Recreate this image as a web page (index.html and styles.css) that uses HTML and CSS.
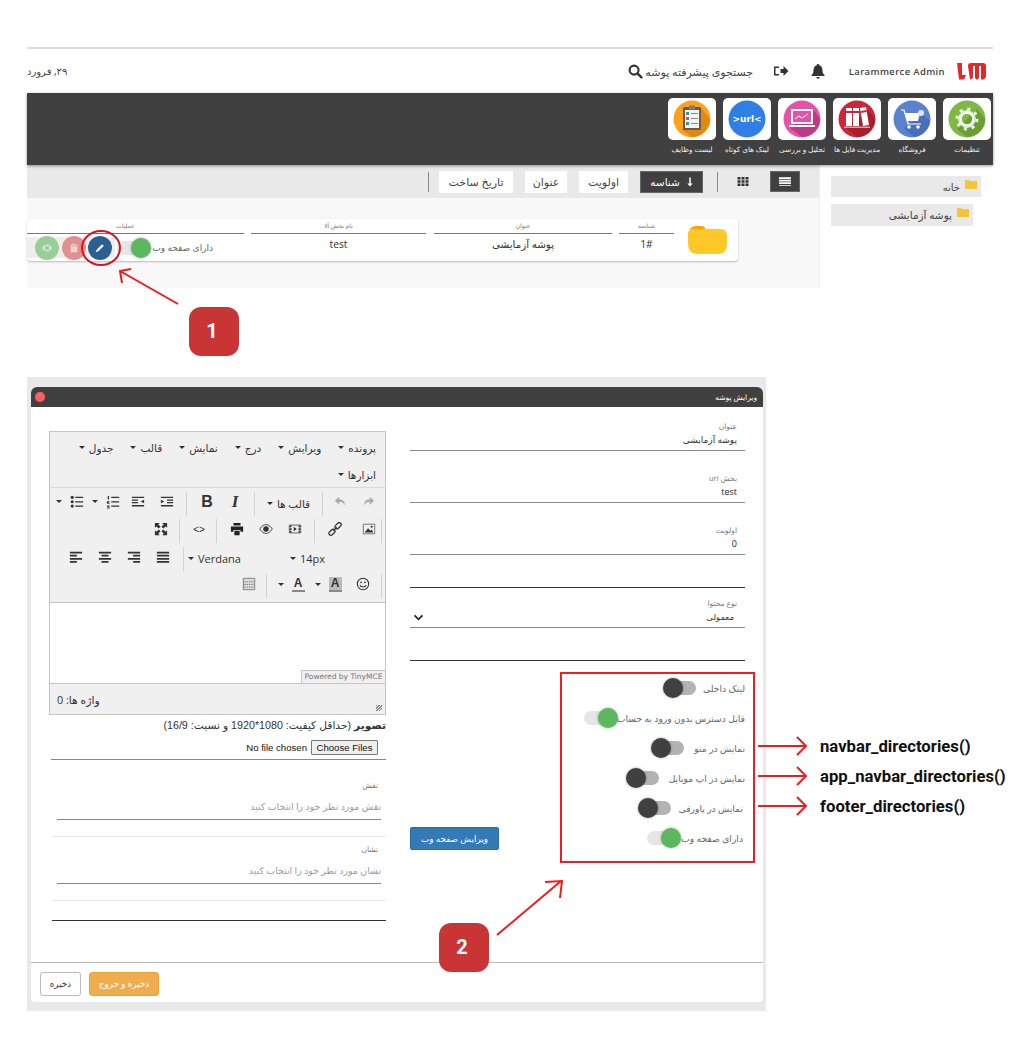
FILE: index.html
```html
<!DOCTYPE html>
<html lang="fa">
<head>
<meta charset="utf-8">
<title>ویرایش پوشه</title>
<link rel="stylesheet" href="styles.css">
</head>
<body>
<main class="page">

  <section class="shot">
    <header class="topbar">
      <svg class="logo" viewBox="0 0 29 18"><path fill="#e8262a" d="M0 1h5v12h4l-2 4.5H2zM11 4q0-3 3-3h12q3 0 3 3v11l-2 2.5h-3V4h-2v12l-2 2-2-2V4h-2v12l-3 1.5z"/></svg>
      <span class="admin">Larammerce Admin</span>
      <svg class="ti ti-bell" viewBox="0 0 16 16"><path fill="#333" d="M8 1a1.3 1.3 0 0 1 1.3 1.3C11.6 3 12.5 5 12.5 7.5c0 2.500.8 3.500 2 4.500v1H1.500v-1c1.200-1 2-2 2-4.500C3.500 5 4.400 3 6.700 2.300A1.300 1.300 0 0 1 8 1zM6.300 14h3.400a1.700 1.700 0 0 1-3.400 0z"/></svg>
      <svg class="ti ti-exit" viewBox="0 0 16 16"><path fill="#333" d="M1 3.500h5v1.500H2.500v6H6v1.500H1zM7.500 6h3V3l5 5-5 5v-3h-3z"/></svg>
      <span class="search-text">جستجوی پیشرفته پوشه</span>
      <svg class="ti ti-search" viewBox="0 0 16 16"><circle cx="6.500" cy="6.500" r="4.800" fill="none" stroke="#333" stroke-width="2.200"/><path stroke="#333" stroke-width="2.600" stroke-linecap="round" d="M10.300 10.300l4 4"/></svg>
      <span class="date">۲۹, فرورد</span>
    </header>

    <nav class="appbar">
      <div class="app">
        <div class="tile"><svg viewBox="0 0 48 42"><circle cx="24" cy="21" r="18.500" fill="#7fb843"/><path fill="#6a9f35" d="M34 11l8 10a18.500 18.500 0 0 1-18 18l-10-8z"/><circle cx="24" cy="21" r="6.500" fill="none" stroke="#fff" stroke-width="2.500"/><circle cx="24" cy="21" r="10" fill="none" stroke="#f2f7e8" stroke-width="3" stroke-dasharray="3 4.850"/><circle cx="24" cy="21" r="8.300" fill="none" stroke="#fff" stroke-width="1"/></svg></div>
        <span class="app-name">تنظیمات</span>
      </div>
      <div class="app">
        <div class="tile"><svg viewBox="0 0 48 42"><circle cx="24" cy="21" r="18.500" fill="#5b82cf"/><path fill="#4a6fb8" d="M33 15l9 8a18.500 18.500 0 0 1-16 16l-10-9z"/><path fill="none" stroke="#fff" stroke-width="1.200" d="M13 12h3l4 14h13"/><path fill="#fff" d="M17 15h15l-2 8H19z"/><circle cx="21" cy="29" r="1.800" fill="#fff"/><circle cx="30" cy="29" r="1.800" fill="#fff"/><circle cx="33" cy="15" r="3" fill="#dfe7f7"/></svg></div>
        <span class="app-name">فروشگاه</span>
      </div>
      <div class="app">
        <div class="tile"><svg viewBox="0 0 48 42"><circle cx="24" cy="21" r="18.500" fill="#c9273a"/><path fill="#a91e2f" d="M35 12l7 9a18.500 18.500 0 0 1-18 18L13 30z"/><path fill="#fff" d="M13 10h6v18h-6zM20 10h6v18h-6zM27 10l6-1 3 18-6 1z"/><path fill="#c9273a" d="M13 13h6v2h-6zM20 13h6v2h-6zM27.500 13l6-1 .3 2-6 1z"/><path fill="#fff" opacity=".6" d="M11 28.500h26v1.500H11z"/></svg></div>
        <span class="app-name">مدیریت فایل ها</span>
      </div>
      <div class="app">
        <div class="tile"><svg viewBox="0 0 48 42"><circle cx="24" cy="21" r="18.500" fill="#e552a9"/><path fill="#b93c87" d="M36 12l6 9a18.500 18.500 0 0 1-18 18L12 30z"/><rect x="13" y="11" width="22" height="15" fill="#fff"/><rect x="15" y="13" width="18" height="11" fill="#e552a9"/><path fill="none" stroke="#fff" stroke-width="1" d="M17 21l4-3 3 2 6-4"/><path fill="#fff" d="M11 27h26v2H11z"/></svg></div>
        <span class="app-name">تحلیل و بررسی</span>
      </div>
      <div class="app">
        <div class="tile"><svg viewBox="0 0 48 42"><circle cx="24" cy="21" r="18.500" fill="#2f7fe6"/><text class="url-mark" x="24" y="24" text-anchor="middle">&gt;url&lt;</text></svg></div>
        <span class="app-name">لینک های کوتاه</span>
      </div>
      <div class="app">
        <div class="tile"><svg viewBox="0 0 48 42"><circle cx="24" cy="21" r="18.500" fill="#ffa11e"/><path fill="#e08a12" d="M33 10l9 11a18.500 18.500 0 0 1-18 18l-10-7z"/><rect x="15" y="9" width="18" height="23" rx="1.500" fill="#6d5a4c"/><rect x="17" y="12" width="14" height="18" fill="#f4f4f4"/><rect x="21" y="7.500" width="6" height="4" fill="#8a7a6c"/><path fill="#2f9e8f" d="M18 14h3v3h-3z"/><path fill="#e24a4a" d="M18 19h3v3h-3z"/><path fill="#2f9e8f" d="M18 24h3v3h-3z"/><path fill="#8a8a8a" d="M23 15h7v1h-7zM23 20h7v1h-7zM23 25h7v1h-7z"/></svg></div>
        <span class="app-name">لیست وظایف</span>
      </div>
    </nav>

    <div class="split">
      <div class="listing">
        <div class="sortbar">
          <span class="view view-on"><svg class="mini" viewBox="0 0 14 10"><path fill="#fff" d="M0 0h14v2H0zM0 3h14v2H0zM0 6h14v2H0zM0 9h14v1H0z"/></svg></span>
          <span class="view view-grid"><svg class="mini" viewBox="0 0 11 9"><path fill="#333" d="M0 0h3v2.500H0zM4 0h3v2.500H4zM8 0h3v2.500H8zM0 3.300h3v2.500H0zM4 3.300h3v2.500H4zM8 3.300h3v2.500H8zM0 6.500h3V9H0zM4 6.500h3V9H4zM8 6.500h3V9H8z"/></svg></span>
          <i class="vsep vsep-a"></i>
          <span class="sort sort-on"><svg class="sort-arrow" viewBox="0 0 8 12"><path fill="#fff" d="M3 0h2v8h2.500L4 12 .5 8H3z"/></svg>شناسه</span>
          <span class="sort sort-b">اولویت</span>
          <span class="sort sort-c">عنوان</span>
          <span class="sort sort-d">تاریخ ساخت</span>
          <i class="vsep vsep-b"></i>
        </div>
        <article class="card">
          <svg class="folder" viewBox="0 0 39 28"><path fill="#ff9f0a" d="M0 12Q0 0 8 0h7l3 3H4z"/><path fill="#ffc727" d="M0 8Q0 3 6 3h26q7 0 7 7v8q0 10-9 10H10Q0 28 0 18z"/></svg>
          <div class="col col-id"><span class="col-head">شناسه</span><span class="col-val">1#</span></div>
          <div class="col col-title"><span class="col-head">عنوان</span><span class="col-val">پوشه آزمایشی</span></div>
          <div class="col col-url"><span class="col-head">نام بخش آلا</span><span class="col-val">test</span></div>
          <div class="col col-ops">
            <span class="col-head col-head-ops">عملیات</span>
            <div class="ops">
              <span class="ops-label">دارای صفحه وب</span>
              <div class="ops-strip">
                <span class="toggle toggle-on"><i></i></span>
                <span class="round round-edit"><svg viewBox="0 0 12 12"><path fill="#fff" d="M8.500 1.500l2 2L4 10l-3 1 1-3z"/></svg></span>
                <span class="round round-del"><svg viewBox="0 0 12 12"><path fill="#f3d0d0" d="M4 1h4v1h3v1H1V2h3zM2 4h8v7H2z"/></svg></span>
                <span class="round round-view"><svg viewBox="0 0 14 10"><path fill="#cfe9cf" d="M7 0c3 0 5.500 2 7 5-1.500 3-4 5-7 5S1.500 8 0 5c1.500-3 4-5 7-5zm0 2a3 3 0 1 0 0 6 3 3 0 0 0 0-6z"/></svg></span>
              </div>
            </div>
          </div>
        </article>
      </div>
      <aside class="tree">
        <div class="tree-item tree-a"><svg class="tree-folder" viewBox="0 0 12 9"><path fill="#f7c338" d="M0 0h4l1 1h7v8H0z"/></svg>خانه</div>
        <div class="tree-item tree-b"><svg class="tree-folder" viewBox="0 0 12 9"><path fill="#f7c338" d="M0 0h4l1 1h7v8H0z"/></svg>پوشه آزمایشی</div>
      </aside>
    </div>
  </section>

  <section class="backdrop">
    <div class="modal">
      <div class="modal-title"><i class="close-dot"></i><span>ویرایش پوشه</span></div>
      <div class="modal-body">

        <div class="col-left">
          <div class="editor">
            <div class="menubar">
              <span class="menu-item">پرونده<i class="caret"></i></span>
              <span class="menu-item">ویرایش<i class="caret"></i></span>
              <span class="menu-item">درج<i class="caret"></i></span>
              <span class="menu-item">نمایش<i class="caret"></i></span>
              <span class="menu-item">قالب<i class="caret"></i></span>
              <span class="menu-item">جدول<i class="caret"></i></span>
              <span class="menu-item menu-tools">ابزارها<i class="caret"></i></span>
            </div>
            <div class="toolbar">
              <div class="tb-row">
                <div class="grp g-history">
                  <span class="btn"><svg viewBox="0 0 16 16"><path fill="#aaa" d="M10 2l5 4.500L10 11V8C7 8 5 8.500 4 12 3 7 6 5 10 5z"/></svg></span>
                  <span class="btn"><svg viewBox="0 0 16 16"><path fill="#aaa" d="M6 2L1 6.500 6 11V8c3 0 5 .5 6 4 1-5-2-7-6-7z"/></svg></span>
                </div>
                <div class="grp g-format"><span class="formats">قالب ها<i class="caret"></i></span></div>
                <div class="grp g-style">
                  <span class="btn glyph glyph-i">I</span>
                  <span class="btn glyph glyph-b">B</span>
                </div>
                <div class="grp g-list">
                  <span class="btn"><svg viewBox="0 0 16 16"><path fill="#333" d="M1 2h14v1.500H1zM8 5h7v1.500H8zM8 8h7v1.500H8zM1 11.500h14V13H1zM1 5.500l4 2-4 2z"/></svg></span>
                  <span class="btn btn-o"><svg viewBox="0 0 16 16"><path fill="#333" d="M1 2h14v1.500H1zM1 5h7v1.500H1zM1 8h7v1.500H1zM1 11.500h14V13H1zM15 5.500l-4 2 4 2z"/></svg></span>
                  <span class="btn btn-num"><svg viewBox="0 0 16 16"><path fill="#333" d="M6 2h9v1.500H6zM6 7h9v1.500H6zM6 12h9v1.500H6zM2 1h1.500v4H2zM1 7h3v1.500H2.500V9H4v1H1zM1 12h3v3.500H1v-1h2v-.5H1.500v-.7H3V13H1z"/></svg></span>
                  <span class="caret-box"><i class="caret"></i></span>
                  <span class="btn btn-bul"><svg viewBox="0 0 16 16"><path fill="#333" d="M6 2h9v1.500H6zM6 7h9v1.500H6zM6 12h9v1.500H6z"/><circle cx="2.500" cy="2.700" r="1.800" fill="#333"/><circle cx="2.500" cy="7.700" r="1.800" fill="#333"/><circle cx="2.500" cy="12.700" r="1.800" fill="#333"/></svg></span>
                  <span class="caret-box"><i class="caret"></i></span>
                </div>
              </div>
              <div class="tb-row">
                <div class="grp grp-r g-media">
                  <span class="btn"><svg viewBox="0 0 16 16"><path fill="none" stroke="#666" d="M1.500 2.500h13v11h-13z"/><path fill="#333" d="M3 12l4-5 2.500 3 1.500-1.500L13 12z"/><circle cx="11" cy="5.500" r="1.200" fill="#333"/></svg></span>
                  <span class="btn"><svg viewBox="0 0 16 16"><g fill="none" stroke="#333" stroke-width="1.400"><rect x="7.500" y="2" width="8" height="4.500" rx="2.200" transform="rotate(-45 11.500 4.200)"/><rect x=".5" y="9.500" width="8" height="4.500" rx="2.200" transform="rotate(-45 4.500 11.700)"/><path d="M6 10l4-4"/></g></svg></span>
                </div>
                <div class="grp g-view">
                  <span class="btn"><svg viewBox="0 0 16 16"><path fill="none" stroke="#555" d="M1.500 3.500h13v9h-13z"/><path fill="#333" d="M6.500 5.500L10 8l-3.500 2.500zM2 4h2v2H2zM2 7h2v2H2zM2 10h2v2H2zM12 4h2v2h-2zM12 7h2v2h-2zM12 10h2v2h-2z"/></svg></span>
                  <span class="btn"><svg viewBox="0 0 16 12"><path fill="none" stroke="#333" d="M.8 6C3 2.500 5.500 1 8 1s5 1.500 7.200 5C13 9.500 10.500 11 8 11S3 9.500.8 6z"/><circle cx="8" cy="6" r="3.200" fill="#333"/></svg></span>
                  <span class="btn"><svg viewBox="0 0 16 16"><path fill="#222" d="M4 1h8v3H4zM1 5h14v6h-3V9H4v2H1zM5 10h6v5H5z"/></svg></span>
                </div>
                <div class="grp g-code"><span class="btn code-mark">&lt;&gt;</span></div>
                <div class="grp g-full"><span class="btn"><svg viewBox="0 0 16 16"><path fill="#333" d="M1 1h5.500L5 2.800 7.500 5.300 5.300 7.500 2.800 5 1 6.500zM15 1v5.500L13.200 5l-2.500 2.500-2.200-2.200L11 2.800 9.500 1zM1 15V9.500L2.800 11l2.500-2.500 2.200 2.200L5 13.200 6.500 15zM15 15H9.500l1.500-1.800-2.500-2.500 2.200-2.200 2.500 2.500L15 9.500z"/></svg></span></div>
              </div>
              <div class="tb-row">
                <div class="grp g-font">
                  <span class="pick pick-size">14px<i class="caret"></i></span>
                  <span class="pick pick-font">Verdana<i class="caret"></i></span>
                </div>
                <div class="grp g-align">
                  <span class="btn"><svg viewBox="0 0 16 16"><path fill="#333" d="M1 2h14v2H1zM1 5.500h14v2H1zM1 9h14v2H1zM1 12.500h14v2H1z"/></svg></span>
                  <span class="btn"><svg viewBox="0 0 16 16"><path fill="#333" d="M1 2h14v2H1zM7 5.500h8v2H7zM1 9h14v2H1zM7 12.500h8v2H7z"/></svg></span>
                  <span class="btn"><svg viewBox="0 0 16 16"><path fill="#333" d="M1 2h14v2H1zM4 5.500h8v2H4zM1 9h14v2H1zM4 12.500h8v2H4z"/></svg></span>
                  <span class="btn"><svg viewBox="0 0 16 16"><path fill="#333" d="M1 2h14v2H1zM1 5.500h8v2H1zM1 9h14v2H1zM1 12.500h8v2H1z"/></svg></span>
                </div>
              </div>
              <div class="tb-row">
                <div class="grp grp-r g-color">
                  <span class="btn"><svg viewBox="0 0 16 16"><circle cx="8" cy="8" r="6.500" fill="none" stroke="#333" stroke-width="1.200"/><circle cx="5.800" cy="6" r="1" fill="#333"/><circle cx="10.200" cy="6" r="1" fill="#333"/><path fill="none" stroke="#333" stroke-width="1.200" d="M4.500 9.500c1 2.500 6 2.500 7 0"/></svg></span>
                  <span class="btn"><span class="a-mark a-bg">A</span></span>
                  <span class="caret-box"><i class="caret"></i></span>
                  <span class="btn btn-a"><span class="a-mark a-line">A</span></span>
                  <span class="caret-box"><i class="caret"></i></span>
                </div>
                <div class="grp g-table"><span class="btn"><svg viewBox="0 0 16 16"><path fill="#ddd" stroke="#777" d="M1.500 1.500h13v13h-13z"/><path fill="none" stroke="#555" stroke-dasharray="1 1" d="M2 5.500h12M2 8.500h12M2 11.500h12"/></svg></span></div>
              </div>
            </div>
            <div class="edit-area"><span class="powered">Powered by TinyMCE</span></div>
            <div class="statusbar">
              <span class="resize"></span>
              <span class="words">واژه ها: 0</span>
            </div>
          </div>

          <div class="img-label"><b>تصویر</b> (حداقل کیفیت: 1080*1920 و نسبت: 16/9)</div>
          <div class="file-row">
            <span class="file-name">No file chosen</span>
            <span class="file-btn">Choose Files</span>
          </div>
          <div class="pick-field pick-role">
            <div class="small-label">نقش</div>
            <div class="placeholder">نقش مورد نظر خود را انتخاب کنید</div>
          </div>
          <div class="pick-field pick-badge">
            <div class="small-label">نشان</div>
            <div class="placeholder">نشان مورد نظر خود را انتخاب کنید</div>
          </div>
          <div class="blank-line"></div>
        </div>

        <div class="col-right">
          <div class="field field-a"><span class="small-label">عنوان</span><span class="value">پوشه آزمایشی</span></div>
          <div class="field"><span class="small-label">بخش url</span><span class="value value-latin">test</span></div>
          <div class="field"><span class="small-label">اولویت</span><span class="value value-latin">0</span></div>
          <div class="field field-blank"></div>
          <div class="field field-select"><span class="small-label">نوع محتوا</span>
            <span class="select-row"><span class="value">معمولی</span>
              <svg class="chevron" viewBox="0 0 12 8"><path fill="none" stroke="#222" stroke-width="2" d="M1.500 1.500L6 6l4.500-4.500"/></svg></span>
          </div>
          <div class="field field-blank"></div>
          <div class="options">
            <button class="web-btn" type="button">ویرایش صفحه وب</button>
            <div class="toggles">
              <div class="tg-row"><span class="tg-label w-a">لینک داخلی</span><span class="toggle"><i></i></span></div>
              <div class="tg-row"><span class="tg-label w-b">قابل دسترس بدون ورود به حساب</span><span class="toggle toggle-on"><i></i></span></div>
              <div class="tg-row"><span class="tg-label w-c">نمایش در منو</span><span class="toggle"><i></i></span></div>
              <div class="tg-row"><span class="tg-label w-d">نمایش در اپ موبایل</span><span class="toggle"><i></i></span></div>
              <div class="tg-row"><span class="tg-label w-e">نمایش در پاورقی</span><span class="toggle"><i></i></span></div>
              <div class="tg-row"><span class="tg-label w-f">دارای صفحه وب</span><span class="toggle toggle-on"><i></i></span></div>
            </div>
          </div>
        </div>
      </div>
      <footer class="modal-foot">
        <button class="foot-btn foot-save" type="button">ذخیره</button>
        <button class="foot-btn foot-exit" type="button">ذخیره و خروج</button>
      </footer>
    </div>
  </section>

  <svg class="marks" viewBox="0 0 1023 1045">
    <g fill="none" stroke="#ee1c1c" stroke-width="2">
      <ellipse cx="101" cy="248" rx="19" ry="17" stroke="#d8141c"/>
      <path d="M178 304L120 271M122 283l-2-12 11-2"/>
      <path d="M497 935l64-54M545 882l17-1-2 17"/>
      <path d="M758 746h48M797 737l9 9-9 9"/>
      <path d="M758 776h48M797 767l9 9-9 9"/>
      <path d="M758 806h48M797 797l9 9-9 9"/>
    </g>
    <rect x="561" y="673" width="193" height="189" fill="none" stroke="#ee1c25" stroke-width="2"/>
  </svg>
  <span class="badge badge-1">1</span>
  <span class="badge badge-2">2</span>
  <span class="fn fn-a">navbar_directories()</span>
  <span class="fn fn-b">app_navbar_directories()</span>
  <span class="fn fn-c">footer_directories()</span>
</main>
</body>
</html>
```

FILE: styles.css
```css
* { box-sizing: border-box; }
html, body { margin: 0; padding: 0; background: #fff; }
body { font-family: "Open Sans", "DejaVu Sans", sans-serif; color: #333; }
i { display: block; font-style: normal; }
svg { display: block; }

.page { position: relative; width: 1023px; height: 1045px; padding-top: 47px; overflow: hidden; }

/* top screenshot */
.shot { margin-left: 27px; width: 966px; border-top: 2px solid #dedede; }
.topbar { display: flex; align-items: center; direction: rtl; height: 44px; padding-right: 7px; }
.logo { width: 29px; height: 18px; margin-left: 12px; }
.admin { direction: ltr; font-size: 9.500px; letter-spacing: .35px; color: #444; font-weight: 600; width: 97px; white-space: nowrap; text-align: right; margin-left: 22px; }
.ti { width: 16px; height: 16px; }
.ti-bell { margin-left: 21px; }
.ti-exit { margin-left: 20px; }
.search-text { font-size: 11px; color: #444; white-space: nowrap; width: 107px; margin-left: 3px; }
.ti-search { width: 15px; height: 15px; }
.date { font-size: 10px; margin-right: auto; white-space: nowrap; color: #444; }

.appbar { display: flex; direction: rtl; gap: 7px; height: 72px; padding: 5px 2px 0 0; background: #404040; box-shadow: 0 1px 3px rgba(0, 0, 0, .4); position: relative; }
.app { width: 48px; display: flex; flex-direction: column; align-items: center; }
.tile { width: 48px; height: 42px; background: #fff; border-radius: 5px; overflow: hidden; }
.tile svg { width: 48px; height: 42px; }
.app-name { margin-top: 4px; font-size: 7.300px; color: #eee; white-space: nowrap; }
.url-mark { font: bold 9px "DejaVu Sans", sans-serif; fill: #fff; }

.split { display: grid; grid-template-columns: 792px 174px; height: 123px; }
.listing { background: #f8f8f8; }
.sortbar { display: flex; direction: rtl; align-items: center; height: 33px; background: #e9e9e9; padding-right: 19px; }
.view { width: 30px; height: 21px; display: flex; align-items: center; justify-content: center; }
.view-on { background: #404040; border: 1px solid #666; }
.view-grid { margin-right: 12px; }
.mini { width: 12px; height: 9px; }
.vsep { width: 1px; height: 20px; background: #888; }
.vsep-a { margin-right: 10px; }
.vsep-b { margin-right: 10px; }
.sort { height: 22px; display: flex; align-items: center; justify-content: center; background: #fff; font-size: 11px; color: #444; white-space: nowrap; }
.sort-on { width: 63px; background: #404040; color: #fff; gap: 7px; margin-right: 14px; border: 1px solid #666; font-size: 10.500px; }
.sort-arrow { width: 6px; height: 10px; }
.sort-b { width: 49px; margin-right: 12px; }
.sort-c { width: 42px; margin-right: 12px; }
.sort-d { width: 74px; margin-right: 12px; }

.card { display: flex; direction: rtl; margin-top: 21px; width: 711px; height: 42px; background: #fff; border-radius: 4px; box-shadow: 0 1px 2px rgba(0, 0, 0, .25); padding-right: 11px; }
.folder { width: 39px; height: 28px; margin: 7px 0 0 14px; flex: none; }
.col { flex: none; }
.col-head { display: block; height: 15px; border-bottom: 1px solid #777; font-size: 6px; line-height: 15px; text-align: center; color: #777; }
.col-head-ops { padding-right: 20px; }
.col-val { display: block; text-align: center; font-size: 10.300px; line-height: 21px; color: #333; }
.col-id { width: 55px; margin-left: 7px; }
.col-id .col-val { direction: ltr; }
.col-title { width: 178px; margin-left: 8px; }
.col-url { width: 175px; margin-left: 7px; }
.col-ops { width: 217px; }
.ops { display: flex; align-items: center; height: 21px; margin-top: 3px; }
.ops-label { font-size: 9px; color: #666; margin-right: 31px; width: 60px; white-space: nowrap; flex: none; }
.ops-strip { display: flex; align-items: center; height: 21px; flex: 1; background: linear-gradient(to left, #fff 0, #fff 38px, #eee 38px); padding-right: 2px; }

.round { width: 24px; height: 24px; border-radius: 50%; display: flex; align-items: center; justify-content: center; flex: none; }
.round svg { width: 10px; height: 10px; }
.round-edit { background: #2a5f8f; margin-right: 5px; }
.round-del { background: #e09090; margin-right: 2px; }
.round-view { background: #97cf97; margin-right: 3px; }

.toggle { position: relative; display: block; width: 34px; height: 14px; flex: none; }
.toggle::before { content: ""; position: absolute; left: 8px; right: 1px; top: 0; bottom: 0; background: #b3b3b3; border-radius: 7px; }
.toggle i { position: absolute; left: 0; top: -3px; width: 20px; height: 20px; border-radius: 50%; background: #404040; box-shadow: 0 0 3px rgba(0, 0, 0, .35); }
.toggle-on::before { left: 0; right: 8px; background: #e6e6e6; }
.toggle-on i { left: auto; right: 0; background: #5cb85c; }

.tree { background: #fff; border-left: 1px solid #eee; padding: 11px 12px 0 11px; direction: rtl; }
.tree-item { display: flex; align-items: center; background: #e9e9e9; font-size: 10px; color: #444; height: 21px; margin-bottom: 7px; gap: 5px; padding-right: 4px; }
.tree-folder { width: 12px; height: 9px; margin-top: -5px; }
.tree-b { margin-right: 8px; height: 22px; font-size: 10.500px; }

/* modal */
.backdrop { position: absolute; left: 27px; top: 377px; width: 739px; height: 634px; background: #e9e9e9; padding: 10px 3px 9px 4px; }
.modal { height: 615px; background: #fff; border-radius: 6px 6px 4px 4px; overflow: hidden; }
.modal-title { display: flex; justify-content: space-between; align-items: center; height: 20px; padding: 0 6px 0 4px; background: #404040; color: #fff; font-size: 7.500px; direction: ltr; }
.close-dot { width: 10px; height: 10px; border-radius: 50%; background: #ff5f5f; }

.modal-body { display: grid; grid-template-columns: 337px 335px; column-gap: 24px; padding-left: 18px; height: 555px; }

/* editor */
.col-left { padding-top: 24px; }
.editor { height: 284px; border: 1px solid #c5c5c5; background: #f0f0f0; display: flex; flex-direction: column; }
.menubar { display: flex; flex-wrap: wrap; direction: rtl; align-content: flex-start; height: 56px; padding: 2px 9px 0 0; border-bottom: 1px solid #d9d9d9; column-gap: 17px; }
.menu-item { display: flex; align-items: center; gap: 4px; height: 27px; font-size: 10.500px; color: #333; white-space: nowrap; }
.menu-tools { margin-left: 200px; }
.caret { width: 0; height: 0; border-left: 3px solid transparent; border-right: 3px solid transparent; border-top: 3px solid #333; }
.toolbar { height: 115px; padding: 2px 3px 0 0; border-bottom: 1px solid #c5c5c5; }
.tb-row { display: flex; direction: rtl; height: 27.500px; align-items: center; }
.grp { display: flex; align-items: center; height: 24px; border-left: 1px solid #d4d4d4; }
.grp-r { border-right: 1px solid #d4d4d4; }
.g-list, .g-full, .g-align, .g-table { border-left: 0; }
.btn { width: 24px; height: 16px; margin-bottom: 4px; display: flex; align-items: center; justify-content: center; flex: none; }
.btn svg { width: 14px; height: 14px; }
.glyph { font: bold 17px "Liberation Serif", serif; color: #333; }
.glyph-b { font-family: "Liberation Sans", sans-serif; font-size: 16px; }
.glyph-i { font-style: italic; }
.code-mark { font: 10px "Liberation Sans", sans-serif; color: #333; }
.caret-box { width: 10px; display: flex; justify-content: center; flex: none; margin-bottom: 4px; }

.g-history { padding: 0 2px 0 6px; gap: 3px; }
.g-format { width: 68px; justify-content: center; }
.formats { display: flex; align-items: center; gap: 4px; font-size: 10.500px; white-space: nowrap; }
.g-style { padding: 0 7px 0 8px; gap: 4px; }
.g-list { padding-right: 7px; gap: 1px; }
.btn-o { margin-right: 4px; }
.g-media { padding-left: 8px; }
.g-media .btn + .btn { margin-right: 10px; }
.g-view { padding: 0 7px 0 8px; gap: 5px; }
.g-code { padding: 0 5px 0 7px; }
.g-full { padding-right: 6px; }
.g-font { width: 199px; padding-right: 57px; }
.pick { display: flex; align-items: center; gap: 4px; font: 11px "Open Sans", sans-serif; color: #333; }
.pick-font { margin-right: 49px; direction: rtl; }
.g-align { padding-right: 8px; gap: 5px; }
.g-color { padding: 0 6px 0 9px; }
.g-color .btn + .btn { margin-right: 4px; }
.g-color .btn-a { margin-right: 3px; }
.g-table { padding-right: 5px; }
.a-mark { font: bold 12px "Liberation Sans", sans-serif; color: #333; display: block; width: 13px; text-align: center; line-height: 13px; border-bottom: 2px solid #888; }
.a-bg { background: #bbb; }

.edit-area { position: relative; height: 81px; background: #fff; border-bottom: 1px solid #c5c5c5; }
.powered { position: absolute; right: 0; bottom: 0; width: 84px; height: 13px; background: #f0f0f0; border-left: 1px solid #c5c5c5; border-top: 1px solid #c5c5c5; font: 7.500px/12px "DejaVu Sans", sans-serif; color: #777; text-align: center; white-space: nowrap; }
.statusbar { flex: 1; display: flex; justify-content: space-between; align-items: center; padding: 0 7px; direction: rtl; position: relative; }
.words { font-size: 10.800px; }
.resize { width: 6px; height: 6px; margin: 18px -4px 0 0; background: repeating-linear-gradient(135deg, #888 0 1px, transparent 1px 2px); }

.img-label { font: 10.700px/20px "Liberation Sans", "DejaVu Sans", sans-serif; direction: rtl; text-align: right; white-space: nowrap; color: #333; }
.file-row { display: flex; align-items: flex-start; justify-content: flex-end; gap: 4px; height: 25px; padding: 5px 8px 0 0; margin-left: 2px; border-bottom: 1px solid #888; }
.file-name { font: 9.600px/15px "Liberation Sans", sans-serif; color: #111; }
.file-btn { height: 15px; width: 67px; border: 1px solid #777; background: #efefef; font: 9.600px/13px "Liberation Sans", sans-serif; text-align: center; color: #111; border-radius: 1px; }

.small-label { display: block; font-size: 7.500px; color: #777; line-height: 10px; }
.pick-field { direction: rtl; margin-left: 3px; border-bottom: 1px solid #e8e8e8; }
.pick-role { height: 77px; padding-top: 20px; }
.pick-badge { height: 64px; padding-top: 7px; }
.pick-field .small-label { padding-right: 8px; }
.placeholder { margin: 5px 5px 0 5px; height: 25px; border-bottom: 1px solid #888; font-size: 9.400px; line-height: 24px; color: #9a9a9a; white-space: nowrap; }
.blank-line { height: 20px; margin-left: 3px; border-bottom: 1px solid #333; }

/* right form */
.field { display: flex; flex-direction: column; justify-content: flex-end; height: 52px; padding: 0 8px 3px 0; border-bottom: 1px solid #888; direction: rtl; }
.field-a { height: 44px; }
.field-blank { height: 33px; border-bottom-color: #333; }
.field-select { height: 40px; }
.value { font-size: 9px; line-height: 14px; color: #333; }
.value-latin { direction: ltr; text-align: right; color: #222; }
.field .small-label { margin-bottom: 2px; }
.select-row { display: flex; justify-content: space-between; align-items: center; }
.chevron { width: 11px; height: 7px; margin-left: 3px; }
.select-row .value { margin-right: 3px; font-size: 8.500px; }

.options { display: flex; justify-content: space-between; height: 180px; margin-top: 12px; }
.web-btn { align-self: flex-end; width: 89px; height: 23px; margin-bottom: 3px; padding: 0; background: #337ab7; border: 1px solid #2e6da4; border-radius: 2px; color: #fff; font: 8.800px "Open Sans", "DejaVu Sans", sans-serif; }
.toggles { direction: rtl; width: 185px; }
.tg-row { display: flex; align-items: center; height: 30px; }
.tg-label { flex: none; font-size: 9.200px; color: #666; white-space: nowrap; }
.w-a { width: 48px; }
.w-b { width: 127px; }
.w-c { width: 60px; }
.w-d { width: 85px; }
.w-e { width: 73px; padding-right: 2px; }
.w-f { width: 64px; padding-right: 2px; }

.modal-foot { display: flex; gap: 8px; height: 40px; padding: 9px 0 0 9px; border-top: 1px solid #bbb; }
.foot-btn { height: 24px; padding: 0; font: 8.800px "Open Sans", "DejaVu Sans", sans-serif; border-radius: 3px; }
.foot-save { width: 41px; background: #fff; border: 1px solid #bbb; color: #333; }
.foot-exit { width: 70px; background: #f0ad4e; border: 1px solid #eea236; color: #fff; }

/* annotations */
.marks { position: absolute; left: 0; top: 0; width: 1023px; height: 1045px; pointer-events: none; }
.badge { position: absolute; width: 50px; height: 49px; padding-right: 4px; border-radius: 12px; background: #c93535; color: #fff; font: bold 20px/49px Roboto, sans-serif; text-align: center; }
.badge-1 { left: 189px; top: 307px; }
.badge-2 { left: 439px; top: 923px; }
.fn { position: absolute; left: 820px; font: bold 16.700px/18px Roboto, sans-serif; color: #111; white-space: nowrap; }
.fn-a { top: 738px; }
.fn-b { top: 768px; }
.fn-c { top: 798px; }
```
